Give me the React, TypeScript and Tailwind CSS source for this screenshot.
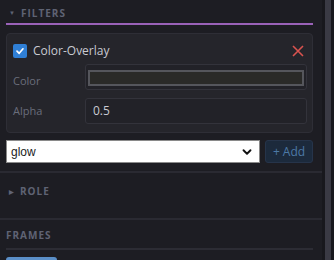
import { ChevronDown } from 'lucide-react';

function SectionHead({ label, open }: { label: string; open?: boolean }) {
  return (
    <div className="flex items-center gap-[5px] pl-[3px] text-[10px] font-bold tracking-[0.1em] text-[#5f6374]">
      <span className="text-[6px] leading-none">{open ? '▼' : '▶'}</span>
      <span>{label}</span>
    </div>
  );
}

export default function App() {
  return (
    <div className="flex h-[260px] w-[334px] overflow-hidden bg-[#1d1d23]" style={{ fontFamily: '"Open Sans", "Noto Sans", sans-serif' }}>
      {/* Panel */}
      <div className="w-[322px] shrink-0">
        <div className="pl-[6px] pr-[9px]">
          <div className="flex h-[23px] items-center pt-[3px]">
            <SectionHead label="FILTERS" open />
          </div>
          <div className="h-[2px] bg-[#9a62b8]" />

          {/* Filter card */}
          <div className="mt-[8px] h-[100px] rounded-[4px] border border-[#2e2e36] bg-[#25252b] pl-[6px] pr-[5px]">
            <div className="flex h-[30px] items-center pt-[4px]">
              <span className="flex h-[14px] w-[14px] items-center justify-center rounded-[2px] bg-[#2f7fd6]">
                <svg width="10" height="10" viewBox="0 0 10 10">
                  <path d="M2 5.2 L4.2 7.3 L8 2.8" stroke="white" strokeWidth="1.7" fill="none" strokeLinecap="round" strokeLinejoin="round" />
                </svg>
              </span>
              <span className="ml-[6px] text-[12px] text-[#c9cad2]">Color-Overlay</span>
              <svg className="ml-auto mr-[3px]" width="12" height="12" viewBox="0 0 12 12">
                <path d="M1 1 L11 11 M11 1 L1 11" stroke="#d9534f" strokeWidth="1.6" />
              </svg>
            </div>
            <div className="flex h-[34px] items-start">
              <span className="w-[72px] pt-[9px] text-[11px] text-[#6a6d7b]">Color</span>
              <div className="flex h-[26px] flex-1 items-center rounded-[3px] border border-[#33333b] bg-[#222228] px-[2px] pt-[3px] pb-[1px]">
                <div className="h-[16px] w-full border-2 border-[#55565c] bg-[#2a2a28]" />
              </div>
            </div>
            <div className="flex h-[26px] items-center">
              <span className="w-[72px] text-[11px] text-[#6a6d7b]">Alpha</span>
              <div className="flex h-[26px] flex-1 items-center rounded-[3px] border border-[#33333b] bg-[#222228] px-[7px] text-[12px] text-[#c9cad2]">
                0.5
              </div>
            </div>
          </div>

          {/* Add filter row */}
          <div className="mt-[7px] flex h-[23px] gap-[5px]">
            <div className="flex flex-1 items-center border border-[#8a8a8a] bg-white pl-[4px] pr-[5px] text-[12px] text-[#222]" style={{ fontFamily: '"Liberation Sans", Arial, sans-serif' }}>
              glow
              <ChevronDown className="ml-auto" size={14} strokeWidth={3.2} color="#111" />
            </div>
            <div className="flex w-[48px] items-center justify-center rounded-[3px] border border-[#26344a] bg-[#1c2a3c] text-[12px] text-[#4c79a6]">
              + Add
            </div>
          </div>
        </div>

        <div className="mt-[8px] h-[2px] bg-[#2a2a32]" />
        <div className="h-[45px] pl-[6px] pt-[11px]">
          <SectionHead label="ROLE" />
        </div>
        <div className="h-[2px] bg-[#2a2a32]" />

        <div className="pl-[6px] pr-[9px]">
          <div className="flex h-[28px] items-end pb-[5px] text-[10px] font-bold tracking-[0.1em] text-[#5f6374]">FRAMES</div>
          <div className="h-[2px] bg-[#2c2c34]" />
          <div className="mt-[7px] h-[10px] w-[51px] rounded-t-[3px] bg-[#5b8fc8]" />
        </div>
      </div>

      {/* Scrollbar */}
      <div className="flex w-[12px] bg-[#18181d] px-[3px]">
        <div className="w-[6px] bg-[#3a3a44]" />
      </div>
    </div>
  );
}
